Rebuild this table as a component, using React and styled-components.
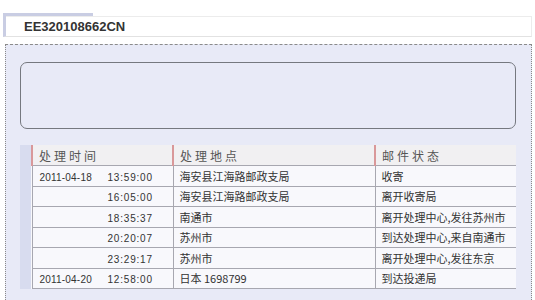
import React from 'react';
import styled, { createGlobalStyle } from 'styled-components';

const GlobalStyle = createGlobalStyle`
  html, body {
    margin: 0;
    padding: 0;
    background: #ffffff;
  }
  body {
    font-family: "Noto Sans CJK SC", "Liberation Sans", sans-serif;
    width: 535px;
    height: 300px;
    overflow: hidden;
  }
`;

const Page = styled.div`
  height: 300px;
  overflow: hidden;
  padding: 13px 3px 0 3px;
  box-sizing: border-box;
  display: flex;
  flex-direction: column;
`;

const Tab = styled.div`
  width: 90px;
  height: 3px;
  background: #c9cde3;
`;

const Header = styled.div`
  height: 20px;
  border-left: 3px solid #c9cde3;
  display: flex;
  align-items: center;
  background: #fff;
  border-bottom: 1px solid #e2e2e2;
  border-right: 1px solid #ececec;
  box-shadow: inset 0 1px 0 #ececec;
`;

const Code = styled.h1`
  margin: 1px 0 0 18px;
  font: bold 13px "Liberation Sans", Arial, sans-serif;
  color: #333;
`;

const Panel = styled.div`
  margin-top: 7px;
  margin-left: 2px;
  flex: 1;
  background: #e8eaf7;
  border-top: 1px dashed #8a8a8a;
  border-left: 1px dotted #8a8a8a;
  border-right: 1px dotted #8a8a8a;
  padding: 17px 15px 0 14px;
`;

const Box = styled.div`
  height: 65px;
  border: 1px solid #75787f;
  border-radius: 7px;
  background: #e8eaf7;
`;

const TableWrap = styled.div`
  margin-top: 16px;
  display: flex;
`;

const Strip = styled.div`
  width: 13px;
  background: #d8dcef;
`;

const Table = styled.table`
  width: 484px;
  border-collapse: collapse;
  table-layout: fixed;
  background: #f8f8fc;
`;

const Th = styled.th`
  height: 20px;
  padding: 0 0 0 6px;
  text-align: left;
  font-weight: normal;
  font-size: 12px;
  color: #555;
  background: #f1f0f2;
  border-left: 2px solid #d9989a;
  border-bottom: 1px solid #a7a7b0;
  letter-spacing: 3px;
`;

const Td = styled.td`
  height: 19.5px;
  padding: 0 0 0 ${p => (p.$first ? 7 : 6)}px;
  font-size: 11px;
  color: #333;
  border-bottom: 1px solid #a7a7b0;
  border-left: 1px solid #a7a7b0;
  white-space: nowrap;
  overflow: hidden;
`;

const DateCell = styled.span`
  display: inline-block;
  width: 68px;
  font: 10px "Liberation Sans", Arial, sans-serif;
  letter-spacing: 0.2px;
  color: #333;
`;

const TimeCell = styled.span`
  font: 10px "Liberation Sans", Arial, sans-serif;
  letter-spacing: 0.8px;
  color: #333;
`;

const rows = [
  ['2011-04-18', '13:59:00', '海安县江海路邮政支局', '收寄'],
  ['', '16:05:00', '海安县江海路邮政支局', '离开收寄局'],
  ['', '18:35:37', '南通市', '离开处理中心,发往苏州市'],
  ['', '20:20:07', '苏州市', '到达处理中心,来自南通市'],
  ['', '23:29:17', '苏州市', '离开处理中心,发往东京'],
  ['2011-04-20', '12:58:00', '日本 1698799', '到达投递局'],
];

export default function App() {
  return (
    <>
      <GlobalStyle />
      <Page>
        <Tab />
        <Header>
          <Code>EE320108662CN</Code>
        </Header>
        <Panel>
          <Box />
          <TableWrap>
            <Strip />
            <Table>
              <colgroup>
                <col style={{ width: 141 }} />
                <col style={{ width: 202 }} />
                <col style={{ width: 141 }} />
              </colgroup>
              <thead>
                <tr>
                  <Th>处理时间</Th>
                  <Th>处理地点</Th>
                  <Th>邮件状态</Th>
                </tr>
              </thead>
              <tbody>
                {rows.map((r, i) => (
                  <tr key={i}>
                    <Td $first>
                      <DateCell>{r[0]}</DateCell>
                      <TimeCell>{r[1]}</TimeCell>
                    </Td>
                    <Td>{r[2]}</Td>
                    <Td>{r[3]}</Td>
                  </tr>
                ))}
              </tbody>
            </Table>
          </TableWrap>
        </Panel>
      </Page>
    </>
  );
}
